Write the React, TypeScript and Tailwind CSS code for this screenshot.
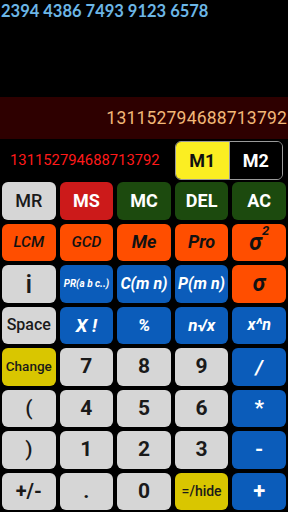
import React from 'react';

type Key = {
  label: React.ReactNode;
  bg: string;
  text: string;
};

const gray = 'bg-[#d6d6d6] text-[#1a1a1a]';
const blue = 'bg-[#0b5cba] text-white italic';
const orange = 'bg-[#ff4e00] text-[#111] italic';
const green = 'bg-[#1c4a0e] text-white';
const yellow = 'bg-[#d9c600] text-[#1a1a1a]';

const keys: Key[] = [
  { label: 'MR', bg: gray, text: 'text-[18px] font-medium' },
  { label: 'MS', bg: 'bg-[#cc1a1a] text-white', text: 'text-[18px] font-bold' },
  { label: 'MC', bg: green, text: 'text-[18px] font-bold' },
  { label: 'DEL', bg: green, text: 'text-[18px] font-bold' },
  { label: 'AC', bg: green, text: 'text-[18px] font-bold' },

  { label: 'LCM', bg: orange, text: 'text-[15.5px] font-medium' },
  { label: 'GCD', bg: orange, text: 'text-[15.5px] font-medium' },
  { label: 'Me', bg: orange, text: 'text-[18px] font-bold' },
  { label: 'Pro', bg: orange, text: 'text-[18px] font-bold' },
  {
    label: (
      <span>
        σ<sup className="text-[13px] align-[8px]">2</sup>
      </span>
    ),
    bg: orange,
    text: 'text-[23px] font-bold',
  },

  { label: 'i', bg: gray, text: 'text-[26px] font-medium' },
  { label: 'PR(a b c..)', bg: blue, text: 'text-[10px] font-bold' },
  { label: 'C(m n)', bg: blue, text: 'text-[16px] font-bold' },
  { label: 'P(m n)', bg: blue, text: 'text-[16px] font-bold' },
  { label: 'σ', bg: orange, text: 'text-[23px] font-bold' },

  { label: 'Space', bg: gray, text: 'text-[16px] font-medium' },
  { label: 'X !', bg: blue, text: 'text-[19px] font-bold' },
  { label: '%', bg: blue, text: 'text-[17px] font-bold' },
  { label: 'n√x', bg: blue, text: 'text-[17px] font-bold' },
  { label: 'x^n', bg: blue, text: 'text-[16px] font-bold' },

  { label: 'Change', bg: yellow, text: 'text-[13.5px] font-medium' },
  { label: '7', bg: gray, text: 'text-[21px] font-bold' },
  { label: '8', bg: gray, text: 'text-[21px] font-bold' },
  { label: '9', bg: gray, text: 'text-[21px] font-bold' },
  { label: '/', bg: blue, text: 'text-[20px] font-bold' },

  { label: '(', bg: gray, text: 'text-[21px] font-medium' },
  { label: '4', bg: gray, text: 'text-[21px] font-bold' },
  { label: '5', bg: gray, text: 'text-[21px] font-bold' },
  { label: '6', bg: gray, text: 'text-[21px] font-bold' },
  { label: '*', bg: 'bg-[#0b5cba] text-white', text: 'text-[21px] font-bold' },

  { label: ')', bg: gray, text: 'text-[21px] font-medium' },
  { label: '1', bg: gray, text: 'text-[21px] font-bold' },
  { label: '2', bg: gray, text: 'text-[21px] font-bold' },
  { label: '3', bg: gray, text: 'text-[21px] font-bold' },
  { label: '-', bg: 'bg-[#0b5cba] text-white', text: 'text-[21px] font-bold' },

  { label: '+/-', bg: gray, text: 'text-[20px] font-bold' },
  { label: '.', bg: gray, text: 'text-[21px] font-bold' },
  { label: '0', bg: gray, text: 'text-[21px] font-bold' },
  { label: '=/hide', bg: yellow, text: 'text-[14px] font-medium' },
  { label: '+', bg: 'bg-[#0b5cba] text-white', text: 'text-[22px] font-bold' },
];

export default function App() {
  return (
    <div
      className="w-[288px] h-[512px] bg-black flex flex-col overflow-hidden"
      style={{ fontFamily: 'Roboto, "Liberation Sans", sans-serif' }}
    >
      {/* history line */}
      <div className="h-[97px] px-[1px] pt-[1px]">
        <p className="text-[#6cb6e6] text-[16.5px] font-bold leading-[20px] font-['Lato',sans-serif]">
          2394 4386 7493 9123 6578
        </p>
      </div>

      {/* result bar */}
      <div className="h-[42px] bg-[#2e0000] flex items-center justify-end pr-[1px]">
        <span className="text-[#f2b878] text-[17.5px] tracking-[0.2px]">131152794688713792</span>
      </div>

      {/* memory row */}
      <div className="h-[43px] flex items-center pl-[10px] pr-[5px]">
        <span className="text-[#ff1a1a] text-[14.8px] flex-1">131152794688713792</span>
        <div className="flex h-[39px] w-[108px] rounded-[6px] border border-[#9a9a9a] overflow-hidden">
          <div className="flex-1 bg-[#fbee22] flex items-center justify-center text-[18px] font-bold text-[#111] border-r border-[#9a9a9a]">
            M1
          </div>
          <div className="flex-1 bg-black flex items-center justify-center text-[18px] font-bold text-white">
            M2
          </div>
        </div>
      </div>

      {/* keypad */}
      <div className="flex-1 grid grid-cols-5 grid-rows-8 gap-x-[4px] gap-y-[4px] px-[2px] pb-[2px]">
        {keys.map((k, i) => (
          <button
            key={i}
            className={`rounded-[6px] flex items-center justify-center leading-none ${k.bg} ${k.text}`}
          >
            {k.label}
          </button>
        ))}
      </div>
    </div>
  );
}
